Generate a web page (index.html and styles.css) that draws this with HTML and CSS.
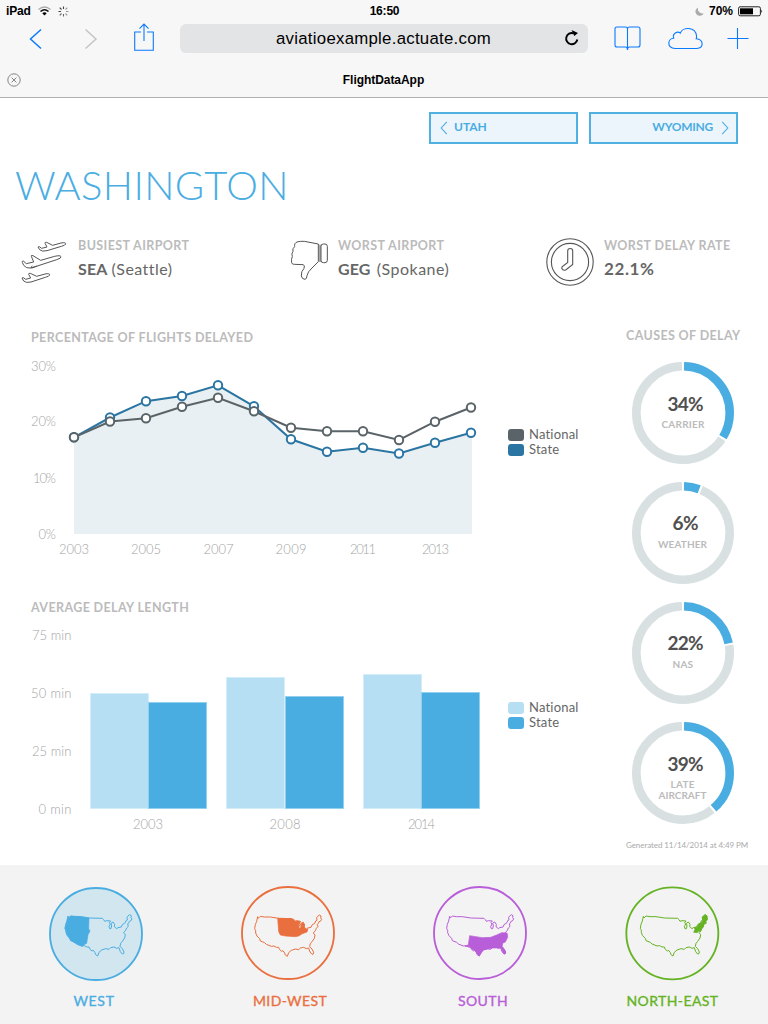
FILE: index.html
```html
<!DOCTYPE html>
<html lang="en">
<head>
<meta charset="utf-8">
<title>FlightDataApp</title>
<link rel="stylesheet" href="styles.css">
</head>
<body>
<header class="chrome">
  <div class="status">
    <div class="status-left"><span>iPad</span>
      <svg width="13" height="10" viewBox="0 0 13 10"><path d="M.5 3.4Q6.500-1.400 12.500 3.400" fill="none" stroke="#aaa" stroke-width="1.300"/><path d="M2.500 5.500Q6.500 2 10.500 5.500" fill="none" stroke="#111" stroke-width="1.600"/><path d="M4.300 7.200Q6.500 5.300 8.700 7.200L6.500 9.500Z"/></svg>
      <svg class="spin" width="11" height="11" viewBox="-5.500 -5.500 11 11" fill="none" stroke-width="1.100"><path stroke="#444" d="M-2-2-3.800-3.800M-2.500 0H-5M0-2.500V-5"/><path stroke="#999" d="M2-2 3.800-3.800M2.500 0H5M2 2 3.800 3.800"/><path stroke="#666" d="M0 2.500V5M-2 2-3.800 3.800"/></svg>
    </div>
    <span class="clock">16:50</span>
    <div class="status-right">
      <svg width="9" height="9" viewBox="0 0 9 9"><path d="M3.200.5A4.300 4.300 0 1 0 8.700 6.200 4.400 4.400 0 0 1 3.200.5Z" fill="#aaa"/></svg>
      <span>70%</span>
      <svg width="25" height="11" viewBox="0 0 25 11"><rect x=".6" y=".8" width="21.800" height="9" rx="1.500" fill="none" stroke="#222"/><rect x="2" y="2.300" width="13" height="6" /><path d="M23.400 3.500Q25 5.300 23.400 7Z"/></svg>
    </div>
  </div>
  <div class="toolbar">
    <svg class="tb-back" width="14" height="22" viewBox="0 0 14 22"><path d="M12 1.500 1.500 11 12 20.500" fill="none" stroke="#0a7aff" stroke-width="1.500"/></svg>
    <svg class="tb-next" width="14" height="22" viewBox="0 0 14 22"><path d="M1.500 1.500 12 11 1.500 20.500" fill="none" stroke="#c4c4c6" stroke-width="1.500"/></svg>
    <svg class="tb-share" width="20" height="28" viewBox="0 0 20 28"><path d="M7 9H.7V27.300H19.300V9H13M10 18V1.200M5.500 5.600 10 1 14.500 5.600" fill="none" stroke="#0a7aff" stroke-width="1.100"/></svg>
    <div class="address"><span>aviatioexample.actuate.com</span>
      <svg class="reload" width="16" height="17" viewBox="0 0 16 17"><path d="M13.300 9.500A5.600 5.600 0 1 1 9.500 3.300" fill="none" stroke="#000" stroke-width="1.900"/><path d="M7.500 0 14 3 10.300 6Z"/></svg>
    </div>
    <svg class="tb-book" width="27" height="25" viewBox="0 0 27 25"><path d="M13.500 3Q13.500 1 11.500 1H3Q1 1 1 3V19Q1 21 3 21H11.500Q13.500 21 13.500 24Q13.500 21 15.500 21H24Q26 21 26 19V3Q26 1 24 1H15.500Q13.500 1 13.500 3V22" fill="none" stroke="#0a7aff" stroke-width="1.100"/></svg>
    <svg class="tb-cloud" width="35" height="23" viewBox="0 0 35 23"><path d="M7 21.500C-1.500 21-.5 11.500 5.700 11.300C4 6.500 9.500 3.500 12.300 6.200C14.500-.5 27.500-.5 28.500 8.800C28.700 10 28.500 11 28.200 11.800C36 12.500 36 21 28.800 21.500Z" fill="none" stroke="#0a7aff" stroke-width="1.100"/></svg>
    <svg class="tb-plus" width="22" height="22" viewBox="0 0 22 22"><path d="M.5 11.500H21.500M10.500 1V22" stroke="#0a7aff" stroke-width="1.100"/></svg>
  </div>
  <div class="tab">
    <svg width="14" height="14" viewBox="0 0 14 14" fill="none" stroke="#777" stroke-width=".9"><circle cx="7" cy="7" r="6.200"/><path d="M4.600 4.600 9.400 9.400M9.400 4.600 4.600 9.400"/></svg>
    <span class="tab-title">FlightDataApp</span>
  </div>
</header>

<main class="page">
  <nav class="siblings">
    <a class="sibling"><svg width="8" height="14" viewBox="0 0 8 14"><path d="M6.800.8 1.200 7 6.800 13.200"/></svg><span class="utah">UTAH</span></a>
    <a class="sibling next"><span class="wyoming">WYOMING</span><svg width="8" height="14" viewBox="0 0 8 14"><path d="M1.200.8 6.800 7 1.200 13.200"/></svg></a>
  </nav>
  <h1 class="state-name">WASHINGTON</h1>

  <section class="stats">
    <div class="stat busiest">
      <svg width="48" height="46" viewBox="60 270 144 138" fill="#fff" stroke="#555" stroke-width="3" stroke-linejoin="round">
        <path d="M67 337Q65 333 70 333L79 341L101 336L94 319Q92 315 99 317L122 331L164 319Q181 315 183 320Q184 325 170 329L112 348L91 354Q79 356 71 346ZM112 348L96 354Q88 354 97 348"/>
        <path d="M114 291L118 290L125 295L141 291L135 280Q134 276 140 277L158 286L183 279Q198 276 197 282Q196 286 184 289L141 302Q126 306 119 299Z"/>
        <path d="M66 384L70 383L77 388L92 384L86 373Q85 369 91 370L110 379L135 372Q150 369 149 375Q148 379 136 382L93 396Q78 400 71 393Z"/>
      </svg>
      <div><div class="label">BUSIEST AIRPORT</div><div class="value"><b>SEA</b> <span class="place">(Seattle)</span></div></div>
    </div>
    <div class="stat worst">
      <svg width="38" height="40" viewBox="62 63 114 120" fill="none" stroke="#555" stroke-width="3" stroke-linejoin="round"><path d="M147 75L105 67Q80 66 77 74Q75 79 76 83Q68 89 71 97Q65 105 69 112Q65 121 67 131Q68 137 76 136L101 137Q108 138 104 148Q95 157 96 171Q98 181 107 181Q112 181 113 170Q115 158 128 147L147 128ZM152 77V129"/><rect x="155" y="75" width="19" height="56" rx="7"/></svg>
      <div><div class="label">WORST AIRPORT</div><div class="value"><b>GEG</b> <span class="place spokane">(Spokane)</span></div></div>
    </div>
    <div class="stat rate">
      <svg width="48" height="48" viewBox="-24 -24 48 48" fill="none" stroke="#555" stroke-width="1.100"><circle r="23.200"/><circle r="18.600"/><path d="M-2.300-11A2.500 2.500 0 0 1 2.700-11V2.500L-4.300 8Q-7 9-8.200 6.500Q-8.500 4.500-6.500 3.800L-2.300.5Z"/></svg>
      <div><div class="label">WORST DELAY RATE</div><div class="value"><b class="pct">22.1%</b></div></div>
    </div>
  </section>

  <div class="board">
    <div class="charts">
      <section class="chart">
        <h2 class="heading">PERCENTAGE OF FLIGHTS DELAYED</h2>
        <div class="chart-row">
          <svg class="plot" width="477" height="214" viewBox="31 350 477 214">
            <path d="M74 437.300 110 417.500 146 401.200 182 396 218 385.300 254 406.300 291 439.300 327 451.700 363 447.700 399 453.500 435 442.700 472 432.500V534H74Z" fill="#e8f0f4"/>
            <g class="series state"><polyline points="74,437.300 110,417.500 146,401.200 182,396 218,385.300 254,406.300 291,439.300 327,451.700 363,447.700 399,453.500 435,442.700 471,432.700"/>
              <circle cx="74" cy="437.300" r="4.200"/><circle cx="110" cy="417.500" r="4.200"/><circle cx="146" cy="401.200" r="4.200"/><circle cx="182" cy="396" r="4.200"/><circle cx="218" cy="385.300" r="4.200"/><circle cx="254" cy="406.300" r="4.200"/><circle cx="291" cy="439.300" r="4.200"/><circle cx="327" cy="451.700" r="4.200"/><circle cx="363" cy="447.700" r="4.200"/><circle cx="399" cy="453.500" r="4.200"/><circle cx="435" cy="442.700" r="4.200"/><circle cx="471" cy="432.700" r="4.200"/></g>
            <g class="series national"><polyline points="74,437.300 110,421.500 146,418.300 182,406.700 218,397.700 254,411.300 291,427.700 327,431.300 363,431.300 399,440 435,421.700 471,407.500"/>
              <circle cx="74" cy="437.300" r="4.200"/><circle cx="110" cy="421.500" r="4.200"/><circle cx="146" cy="418.300" r="4.200"/><circle cx="182" cy="406.700" r="4.200"/><circle cx="218" cy="397.700" r="4.200"/><circle cx="254" cy="411.300" r="4.200"/><circle cx="291" cy="427.700" r="4.200"/><circle cx="327" cy="431.300" r="4.200"/><circle cx="363" cy="431.300" r="4.200"/><circle cx="399" cy="440" r="4.200"/><circle cx="435" cy="421.700" r="4.200"/><circle cx="471" cy="407.500" r="4.200"/></g>
            <g class="axis">
              <text x="31" y="370.500" textLength="25">30%</text><text x="31" y="426" textLength="25">20%</text><text x="33" y="483" textLength="23">10%</text><text x="38.500" y="539" textLength="17.500">0%</text>
              <text x="59" y="554" textLength="30">2003</text><text x="131" y="554" textLength="30">2005</text><text x="203.500" y="554" textLength="30">2007</text><text x="275.500" y="554" textLength="31">2009</text><text x="350" y="554" textLength="26">2011</text><text x="422" y="554" textLength="27">2013</text>
            </g>
          </svg>
          <ul class="legend legend-line"><li><i class="sw slate"></i>National</li><li><i class="sw navy"></i>State</li></ul>
        </div>
      </section>
      <section class="chart">
        <h2 class="heading">AVERAGE DELAY LENGTH</h2>
        <div class="chart-row">
          <svg class="plot" width="477" height="214" viewBox="31 620 477 214">
            <g fill="#b6dff3" stroke="#d3edf9"><path d="M90.500 693.500H148.500V808.500H90.500ZM226.500 677.500H284.500V808.500H226.500ZM363.500 674.500H421.500V808.500H363.500Z"/></g>
            <g fill="#4aade2" stroke="#92d0ef"><path d="M148.500 702.500H206.500V808.500H148.500ZM285.500 696.500H343.500V808.500H285.500ZM421.500 692.500H479.500V808.500H421.500Z"/></g>
            <g class="axis">
              <text x="32" y="640" textLength="39.500">75 min</text><text x="31" y="698" textLength="40.500">50 min</text><text x="32" y="756" textLength="39.500">25 min</text><text x="38.500" y="814" textLength="33">0 min</text>
              <text x="133" y="829" textLength="30">2003</text><text x="269.500" y="829" textLength="31">2008</text><text x="408" y="829" textLength="27">2014</text>
            </g>
          </svg>
          <ul class="legend legend-bar"><li><i class="sw pale"></i>National</li><li><i class="sw sky"></i>State</li></ul>
        </div>
      </section>
    </div>
    <aside class="causes">
      <h2 class="heading">CAUSES OF DELAY</h2>
      <svg class="donut" viewBox="-51 -51 102 102"><circle class="part" r="46.700" pathLength="100" stroke-dasharray="33.300 66.700" stroke-dashoffset="-.35"/><circle class="rest" r="46.700" pathLength="100" stroke-dasharray="65.300 34.700" stroke-dashoffset="-34.350"/><text class="num" x="-15.500" y="-2" textLength="36">34%</text><text class="cause" x="-21.500" y="15" textLength="43">CARRIER</text></svg>
      <svg class="donut" viewBox="-51 -51 102 102"><circle class="part" r="46.700" pathLength="100" stroke-dasharray="5.300 94.700" stroke-dashoffset="-.35"/><circle class="rest" r="46.700" pathLength="100" stroke-dasharray="93.300 6.700" stroke-dashoffset="-6.350"/><text class="num" x="-10.500" y="-3" textLength="26">6%</text><text class="cause" x="-25" y="15" textLength="49">WEATHER</text></svg>
      <svg class="donut" viewBox="-51 -51 102 102"><circle class="part" r="46.700" pathLength="100" stroke-dasharray="21.300 78.700" stroke-dashoffset="-.35"/><circle class="rest" r="46.700" pathLength="100" stroke-dasharray="77.300 22.700" stroke-dashoffset="-22.350"/><text class="num" x="-15.500" y="-3" textLength="36">22%</text><text class="cause" x="-10.500" y="15" textLength="20.500">NAS</text></svg>
      <svg class="donut" viewBox="-51 -51 102 102"><circle class="part" r="46.700" pathLength="100" stroke-dasharray="38.300 61.700" stroke-dashoffset="-.35"/><circle class="rest" r="46.700" pathLength="100" stroke-dasharray="60.300 39.700" stroke-dashoffset="-39.350"/><text class="num" x="-15.500" y="-2" textLength="36">39%</text><text class="cause" x="-12.500" y="15" textLength="24">LATE</text><text class="cause" x="-24.500" y="26" textLength="48">AIRCRAFT</text></svg>
      <p class="generated">Generated 11/14/2014 at 4:49 PM</p>
    </aside>
  </div>
</main>

<footer class="regions">
  <svg width="0" height="0" class="defs"><defs>
    <path id="usa" d="M112 141 114 146 120 140 132 142 150 142 175 146 215 147 219 151 222 156 228 154 240 155 236 160 239 164 235 172 237 178 241 178 243 170 241 162 247 158 252 165 251 172 258 178 262 175 272 173 275 166 284 160 286 154 290 152 289 144 292 140 297 136 302 139 301 145 304 149 300 155 296 156 294 161 291 164 293 171 288 176 285 183 279 190 284 196 282 206 275 216 270 222 268 231 275 238 280 248 279 253 275 254 269 247 265 235 258 237 250 233 240 235 235 240 225 238 213 242 205 249 201 260 195 256 193 250 188 243 184 245 178 240 175 233 168 233 161 229 153 230 138 224 133 219 120 214 118 207 110 199 106 190 106 183 103 177 105 165 109 155Z"/>
  </defs></svg>
  <div class="region west"><svg class="badge" viewBox="55 53 282 282"><circle class="ring" cx="196" cy="194" r="138"/><use href="#usa" class="outline"/><path class="area" d="M112 141 114 146 120 140 150 142 175 146 174 178 178 185 172 196 168 222 160 226 155 231 138 224 120 213 110 198 103 177 109 155Z"/></svg><span class="name n-west">WEST</span></div>
  <div class="region midwest"><svg class="badge" viewBox="62 56 282 282"><circle class="ring" cx="203" cy="194" r="138"/><g transform="translate(0 4)"><use href="#usa" class="outline"/><path class="area" d="M172 146 215 147 223 151 223 156 230 153 241 156 236 162 235 174 241 177 243 162 249 158 253 165 251 174 259 179 263 177 260 187 246 192 235 199 225 201 195 199 180 196 175 186Z"/></g></svg><span class="name n-mid">MID-WEST</span></div>
  <div class="region south"><svg class="badge" viewBox="62 53 282 282"><circle class="ring" cx="203" cy="191" r="138"/><use href="#usa" class="outline"/><path class="area" d="M172 199 209 205 235 204 253 197 268 190 284 191 286 204 279 218 270 222 269 231 280 248 279 253 275 254 265 236 240 236 213 242 201 260 195 256 188 243 178 240 172 232 158 231 168 226Z"/></svg><span class="name n-south">SOUTH</span></div>
  <div class="region northeast"><svg class="badge" viewBox="57 53 282 282"><circle class="ring" cx="199" cy="192" r="138"/><use href="#usa" class="outline"/><path class="area" d="M263 189 267 180 264 175 274 173 276 166 287 159 291 152 289 143 298 136 304 141 304 151 300 156 301 162 293 166 292 174 286 179 284 187 277 185 274 190Z"/></svg><span class="name n-ne">NORTH-EAST</span></div>
</footer>
</body>
</html>
```

FILE: styles.css
```css
* { box-sizing: border-box; }
body { margin: 0; width: 768px; height: 1024px; overflow: hidden; background: #fff; font-family: Lato, "Open Sans", sans-serif; font-variant-ligatures: none; color: #666; display: flex; flex-direction: column; }
svg { display: block; flex: none; }
h1, h2, p, ul { margin: 0; padding: 0; }

.chrome { height: 98px; flex: none; background: #f7f7f7; border-bottom: 1px solid #b0b0b0; font-family: "Liberation Sans", Arial, sans-serif; color: #000; }
.status { height: 22px; display: grid; grid-template-columns: 1fr auto 1fr; align-items: center; padding: 0 5px 0 6px; font-size: 12px; font-weight: 700; }
.status-left, .status-right { display: flex; align-items: center; gap: 7px; }
.status-left span { letter-spacing: -.2px; }
.clock { letter-spacing: -.2px; }
.status-right { justify-content: flex-end; gap: 5px; }
.toolbar { height: 38px; display: flex; align-items: flex-start; padding: 1px 19px 0 29px; }
.tb-back, .tb-next { margin-top: 5px; }
.tb-next { margin-left: 41px; }
.tb-share { margin: 0 0 0 36px; }
.address { width: 408px; height: 29px; margin: 1px 0 0 26px; padding: 0 8px 0 0; border-radius: 6px; background: #e3e4e6; display: flex; align-items: center; font-size: 16.800px; }
.address span { flex: 1; padding-left: 96px; letter-spacing: .27px; white-space: nowrap; }
.tb-book { margin: 3px 0 0 26px; }
.tb-cloud { margin: 4px 0 0 27px; }
.tb-plus { margin: 4px 0 0 24px; }
.tab { height: 37px; display: grid; grid-template-columns: 14px 1fr 14px; align-items: center; padding: 3px 8px 0 7px; }
.tab-title { text-align: center; font-size: 12px; font-weight: 700; letter-spacing: -.05px; }

.page { height: 767px; flex: none; }
.siblings { display: flex; justify-content: flex-end; gap: 11px; padding: 14px 30px 0 0; }
.sibling { width: 149px; height: 32px; border: 2px solid #51b0e2; background: #edf5fc; display: flex; align-items: center; gap: 6px; padding: 0 9px; color: #4aade2; font-size: 12px; line-height: 14px; font-weight: 700; }
.sibling span { padding-bottom: 2px; }
.wyoming { letter-spacing: -.25px; }
.sibling.next { justify-content: flex-end; padding-right: 7px; gap: 8px; }
.sibling svg { fill: none; stroke: #4aade2; stroke-width: 1.100; }
.state-name { margin: 16px 0 0 15px; height: 51px; line-height: 50px; font-size: 40px; font-weight: 300; color: #4aade2; letter-spacing: .35px; }

.stats { display: grid; grid-template-columns: 270px 256px 1fr; height: 74px; padding: 27px 0 0 20px; }
.stat { display: flex; align-items: flex-start; gap: 10px; }
.busiest svg, .worst svg { margin-top: 2px; }
.label { height: 14px; line-height: 15px; font-size: 12.500px; font-weight: 700; color: #bbb; letter-spacing: .4px; white-space: nowrap; }
.value { height: 22px; margin-top: 6px; line-height: 22px; font-size: 16px; letter-spacing: .1px; white-space: nowrap; }
.place { letter-spacing: .45px; }
.spokane { padding-left: 2px; letter-spacing: .5px; }
.value .pct { font-size: 17px; letter-spacing: .6px; }

.board { display: flex; padding: 36px 0 0 31px; }
.charts { width: 595px; }
.chart { height: 270px; padding-top: 9px; }
.heading { height: 16px; line-height: 16px; font-size: 12.500px; font-weight: 700; color: #bbb; letter-spacing: .38px; white-space: nowrap; }
.chart .heading { height: 20px; }
.chart-row { display: flex; }
.axis text { font: 300 13px Lato, sans-serif; fill: #a4a4a4; }
.series polyline { fill: none; stroke-width: 2; }
.series circle { fill: #fff; stroke-width: 2; }
.state { stroke: #2b75a3; }
.national { stroke: #5a6468; }
.legend { list-style: none; font-size: 13px; line-height: 15px; padding-top: 77px; letter-spacing: .2px; }
.legend-bar { padding-top: 80px; }
.legend li { display: flex; align-items: center; gap: 5px; height: 15px; }
.sw { width: 16px; height: 12px; border-radius: 3px; }
.slate { background: #5a6468; }
.navy { background: #2b75a3; }
.pale { background: #b6dff3; }
.sky { background: #4aade2; }

.causes { flex: 1; padding-top: 7px; }
.donut { width: 102px; height: 102px; margin: 18px 0 0 6px; }
.donut circle { fill: none; stroke-width: 8.600; transform: rotate(-90deg); }
.part { stroke: #4aade2; }
.rest { stroke: #d8e0e2; }
.num { font: 700 19px Lato, sans-serif; fill: #505050; }
.cause { font: 700 10px Lato, sans-serif; fill: #bbb; }
.generated { margin-top: 16px; font-size: 8px; line-height: 11px; color: #aaa; letter-spacing: -.08px; white-space: nowrap; }

.regions { height: 159px; flex: none; background: #f3f3f3; display: grid; grid-template-columns: repeat(4, 192px); }
.defs { position: absolute; }
.region { display: flex; flex-direction: column; align-items: center; padding-top: 22px; color: var(--tone); }
.west { --tone: #4aade2; }
.midwest { --tone: #ea6f3f; }
.south { --tone: #b85ed8; }
.northeast { --tone: #65b324; }
.badge { width: 94px; height: 94px; overflow: visible; }
.ring { fill: none; stroke: var(--tone); stroke-width: 5.500; }
.west .ring { fill: #d2e6ef; }
.outline { fill: none; stroke: var(--tone); stroke-width: 3; }
.area { fill: var(--tone); stroke: var(--tone); stroke-width: 2; }
.name { margin-top: 10px; height: 20px; line-height: 20px; font-size: 14px; letter-spacing: .4px; -webkit-text-stroke: .35px var(--tone); }
.n-west { padding-right: 4px; letter-spacing: .7px; }
.n-mid { padding-left: 4px; }
.n-south { padding-left: 6px; }
.n-ne { padding-left: 1px; }
```
